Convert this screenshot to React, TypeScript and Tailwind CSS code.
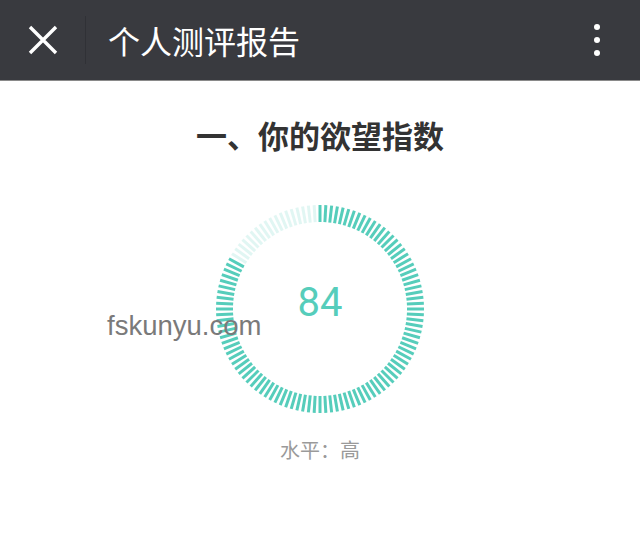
import React from "react";

const TEAL = "#56cdbb";

function Ring() {
  const ticks = [];
  const cx = 110;
  const cy = 110;
  const r1 = 87;
  const r2 = 104;
  const n = 112;
  for (let i = 0; i < n; i++) {
    const a = (i * 2 * Math.PI) / n;
    const s = Math.sin(a);
    const c = Math.cos(a);
    const on = i < Math.round(n * 0.84);
    ticks.push(
      <line
        key={i}
        x1={cx + r1 * s}
        y1={cy - r1 * c}
        x2={cx + r2 * s}
        y2={cy - r2 * c}
        stroke={TEAL}
        strokeOpacity={on ? 1 : 0.18}
        strokeWidth={3}
      />
    );
  }
  return (
    <svg width="220" height="220" viewBox="0 0 220 220">
      {ticks}
    </svg>
  );
}

export default function App() {
  return (
    <div
      className="relative w-[640px] h-[540px] bg-white overflow-hidden"
      style={{ fontFamily: '"Noto Sans", "Noto Sans CJK SC", sans-serif' }}
    >
      <div className="flex items-center h-[81px] bg-[#393a3f] border-b border-[#8a8a8a]">
        <div className="w-[85px] h-full flex items-center justify-center">
          <svg width="30" height="30" viewBox="0 0 30 30">
            <path d="M2 2 L28 28 M28 2 L2 28" stroke="#ffffff" strokeWidth="3.4" strokeLinecap="butt" />
          </svg>
        </div>
        <div className="w-px h-[48px] bg-[#303136]" />
        <div
          className="ml-[22px] text-[32px] leading-none text-white"
          style={{ fontFamily: '"Noto Sans CJK SC", sans-serif' }}
        >
          个人测评报告
        </div>
        <div className="ml-auto mr-[40px] flex flex-col gap-[7px]">
          <div className="w-[6px] h-[6px] rounded-full bg-white" />
          <div className="w-[6px] h-[6px] rounded-full bg-white" />
          <div className="w-[6px] h-[6px] rounded-full bg-white" />
        </div>
      </div>

      <div className="flex flex-col items-center">
        <div
          className="mt-[34px] text-[31px] leading-[40px] font-bold text-[#333333]"
          style={{ fontFamily: '"Noto Sans CJK SC", sans-serif' }}
        >
          一、你的欲望指数
        </div>
        <div className="relative mt-[44px] w-[220px] h-[220px]">
          <Ring />
          <div
            className="absolute inset-0 flex items-center justify-center pb-[12px] text-[40px] leading-none"
            style={{ color: TEAL, fontFamily: 'Roboto, "Liberation Sans", sans-serif' }}
          >
            84
          </div>
        </div>
        <div
          className="mt-[17px] text-[20px] leading-[28px] text-[#9a9a9a]"
          style={{ fontFamily: '"Noto Sans CJK SC", sans-serif' }}
        >
          水平：高
        </div>
      </div>

      <div
        className="absolute left-[107px] top-[309px] text-[27.5px] leading-[34px] text-[#7a7a7a]"
        style={{ fontFamily: '"Liberation Sans", Arial, sans-serif' }}
      >
        fskunyu.com
      </div>
    </div>
  );
}
